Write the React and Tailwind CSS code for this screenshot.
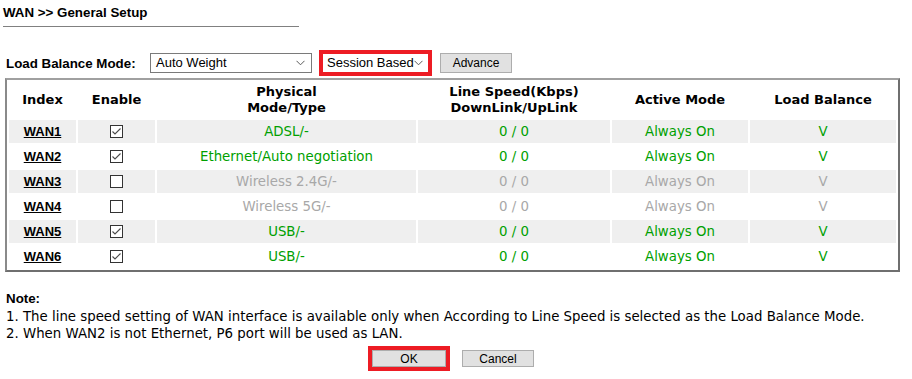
const rows = [
  { name: "WAN1", on: true, type: "ADSL/-" },
  { name: "WAN2", on: true, type: "Ethernet/Auto negotiation" },
  { name: "WAN3", on: false, type: "Wireless 2.4G/-" },
  { name: "WAN4", on: false, type: "Wireless 5G/-" },
  { name: "WAN5", on: true, type: "USB/-" },
  { name: "WAN6", on: true, type: "USB/-" },
];

function Chevron() {
  return (
    <svg width="9" height="6" viewBox="0 0 9 6" className="shrink-0">
      <polyline points="0.5,0.8 4.5,4.8 8.5,0.8" fill="none" stroke="#5a5a5a" strokeWidth="1" />
    </svg>
  );
}

function CheckBox({ on }) {
  return (
    <span className="inline-flex w-[13px] h-[13px] border border-[#333] bg-white items-center justify-center align-middle">
      {on && (
        <svg width="11" height="11" viewBox="0 0 11 11">
          <polyline points="1.5,5.5 4,8 9.5,2.5" fill="none" stroke="#4a4a4a" strokeWidth="1.1" />
        </svg>
      )}
    </span>
  );
}

export default function App() {
  return (
    <div className="w-[912px] h-[379px] bg-white overflow-hidden text-black font-['Liberation_Sans',Arial,sans-serif]">
      <div className="pl-[3px] pt-[5px] text-[13.33px] leading-[15px] font-bold">WAN &gt;&gt; General Setup</div>
      <div className="ml-[3px] mt-[6px] w-[296px] h-px bg-[#808080]"></div>

      <div className="mt-[23px] h-[26px] flex items-center">
        <div className="pl-[6px] w-[150px] text-[13.33px] leading-[15px] font-bold">Load Balance Mode:</div>
        <div className="w-[162px] h-[20px] border border-[#7a7a7a] bg-white flex items-center justify-between pl-[5px] pr-[6px] text-[13px]">
          <span>Auto Weight</span>
          <Chevron />
        </div>
        <div className="ml-[7px] border-[4px] border-[#ed1c24]">
          <div className="w-[105px] h-[18px] bg-white flex items-center justify-between pl-[4px] pr-[5px] text-[13px]">
            <span>Session Based</span>
            <Chevron />
          </div>
        </div>
        <div className="ml-[8px] w-[72px] h-[20px] bg-[#e1e1e1] border border-[#adadad] flex items-center justify-center text-[12px]">Advance</div>
      </div>

      <table className="mt-[2px] ml-[5px] w-[895px] table-fixed border-separate border-spacing-[2px] border-2 border-t-[#a0a0a0] border-l-[#8a8a8a] border-r-[#6f6f6f] border-b-[#6f6f6f] font-['DejaVu_Sans',Verdana,sans-serif]">
        <thead>
          <tr className="h-[36px] text-[13px] leading-[16px] font-bold">
            <th className="w-[67px] p-0 font-bold">Index</th>
            <th className="w-[77px] p-0 font-bold">Enable</th>
            <th className="w-[259px] p-0 font-bold">Physical<br />Mode/Type</th>
            <th className="w-[192px] p-0 font-bold">Line Speed(Kbps)<br />DownLink/UpLink</th>
            <th className="w-[136px] p-0 font-bold">Active Mode</th>
            <th className="w-[146px] p-0 font-bold">Load Balance</th>
          </tr>
        </thead>
        <tbody>
          {rows.map((r, i) => {
            const bg = i % 2 === 0 ? "bg-[#efefef]" : "bg-white";
            const col = r.on ? "text-[#00a000]" : "text-[#a8a8a8]";
            return (
              <tr key={r.name} className="h-[23px] text-[13.33px] leading-[16px]">
                <td className={`${bg} p-0 text-center font-bold font-['Liberation_Sans',Arial,sans-serif] text-[13px] underline`}>{r.name}</td>
                <td className={`${bg} p-0 text-center leading-[0]`}><CheckBox on={r.on} /></td>
                <td className={`${bg} p-0 text-center ${col}`}>{r.type}</td>
                <td className={`${bg} p-0 text-center ${col}`}>0 / 0</td>
                <td className={`${bg} p-0 text-center ${col}`}>Always On</td>
                <td className={`${bg} p-0 text-center ${col}`}>V</td>
              </tr>
            );
          })}
        </tbody>
      </table>

      <div className="mt-[19px] pl-[6px] text-[13.33px] leading-[15px] font-bold">Note:</div>
      <div className="mt-[2px] pl-[6px] text-[13.33px] leading-[17px] font-['DejaVu_Sans',Verdana,sans-serif]">
        <div>1. The line speed setting of WAN interface is available only when According to Line Speed is selected as the Load Balance Mode.</div>
        <div>2. When WAN2 is not Ethernet, P6 port will be used as LAN.</div>
      </div>

      <div className="mt-[4px] w-[902px] flex justify-center items-center gap-[12px]">
        <div className="border-[4px] border-[#ed1c24]">
          <div className="w-[74px] h-[17px] bg-[#e1e1e1] border border-[#adadad] flex items-center justify-center text-[12px]">OK</div>
        </div>
        <div className="w-[72px] h-[17px] bg-[#e1e1e1] border border-[#adadad] flex items-center justify-center text-[12px]">Cancel</div>
      </div>
    </div>
  );
}
